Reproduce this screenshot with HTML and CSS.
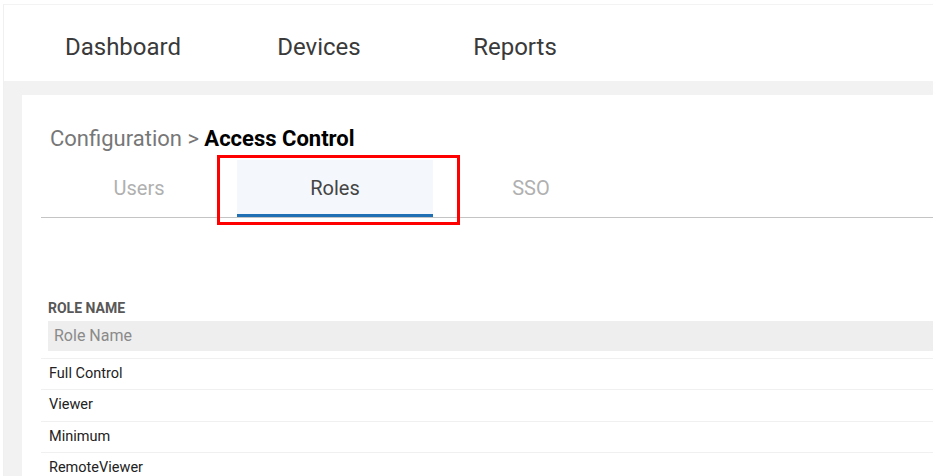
FILE: index.html
```html
<!DOCTYPE html>
<html lang="en">
<head>
<meta charset="utf-8">
<title>Access Control - Roles</title>
<link rel="stylesheet" href="styles.css">
</head>
<body>
<div class="frame">
  <header class="topbar">
    <nav class="mainnav">
      <a class="nav-item">Dashboard</a>
      <a class="nav-item">Devices</a>
      <a class="nav-item">Reports</a>
    </nav>
  </header>
  <main class="card">
    <div class="breadcrumb"><span class="crumb-parent">Configuration &gt; </span><span class="crumb-current">Access Control</span></div>
    <div class="tabbar">
      <div class="tab">Users</div>
      <div class="tab tab-active">Roles</div>
      <div class="tab">SSO</div>
      <div class="highlight"></div>
    </div>
    <section class="roles">
      <div class="col-label">ROLE NAME</div>
      <input class="filter" type="text" placeholder="Role Name">
      <div class="rows">
        <div class="row">Full Control</div>
        <div class="row">Viewer</div>
        <div class="row">Minimum</div>
        <div class="row">RemoteViewer</div>
      </div>
    </section>
  </main>
</div>
</body>
</html>
```
FILE: styles.css
```css
html, body {
  margin: 0;
  padding: 0;
  background: #ffffff;
}
body {
  font-family: Roboto, "Liberation Sans", Arial, sans-serif;
}
.frame {
  margin: 4px 0 0 3px;
  width: 930px;
  height: 472px;
  overflow: hidden;
  box-sizing: border-box;
  border-top: 1px solid #f3f3f3;
  border-left: 1px solid #f0f0f0;
  background: #f2f2f2;
}
.topbar {
  background: #ffffff;
  height: 76px;
  box-sizing: border-box;
  padding: 28px 0 0 21px;
}
.mainnav {
  display: flex;
}
.nav-item {
  width: 196px;
  text-align: center;
  font-size: 24px;
  line-height: 28px;
  color: #3a3a3a;
}
.card {
  margin: 14px 0 0 18px;
  width: 1000px;
  height: 400px;
  background: #ffffff;
  box-sizing: border-box;
  padding: 31px 0 0 19px;
}
.breadcrumb {
  margin-left: 9px;
  font-size: 22px;
  line-height: 26px;
  height: 26px;
  white-space: nowrap;
}
.crumb-parent {
  color: #777777;
}
.crumb-current {
  color: #000000;
  font-weight: 700;
}
.tabbar {
  position: relative;
  display: flex;
  margin-top: 8px;
  border-bottom: 1px solid #c4c4c4;
}
.tab {
  width: 196px;
  height: 57px;
  box-sizing: border-box;
  padding-top: 2px;
  border-bottom: 3px solid transparent;
  text-align: center;
  font-size: 20px;
  line-height: 52px;
  color: #b0b0b0;
}
.tab-active {
  background: #f4f8fc;
  border-bottom-color: #1f6fb5;
  color: #444444;
}
.highlight {
  position: absolute;
  left: 176px;
  top: -5px;
  width: 243px;
  height: 70px;
  box-sizing: border-box;
  border: 3px solid #ff0000;
}
.roles {
  padding-top: 82px;
}
.col-label {
  margin-left: 7px;
  font-size: 14px;
  line-height: 16px;
  font-weight: 700;
  color: #585858;
}
.filter {
  display: block;
  margin: 5px 0 0 7px;
  width: 950px;
  height: 30px;
  box-sizing: border-box;
  border: none;
  outline: none;
  background: #eeeeee;
  padding: 0 0 2px 6px;
  font-family: Roboto, "Liberation Sans", Arial, sans-serif;
  font-size: 16px;
  color: #333333;
}
.filter::placeholder {
  color: #8a8a8a;
}
.rows {
  margin-top: 7px;
}
.row {
  height: 31.3px;
  box-sizing: border-box;
  border-top: 1px solid #f0f0f0;
  padding-left: 8px;
  font-size: 14.5px;
  line-height: 30.3px;
  color: #222222;
}
```
